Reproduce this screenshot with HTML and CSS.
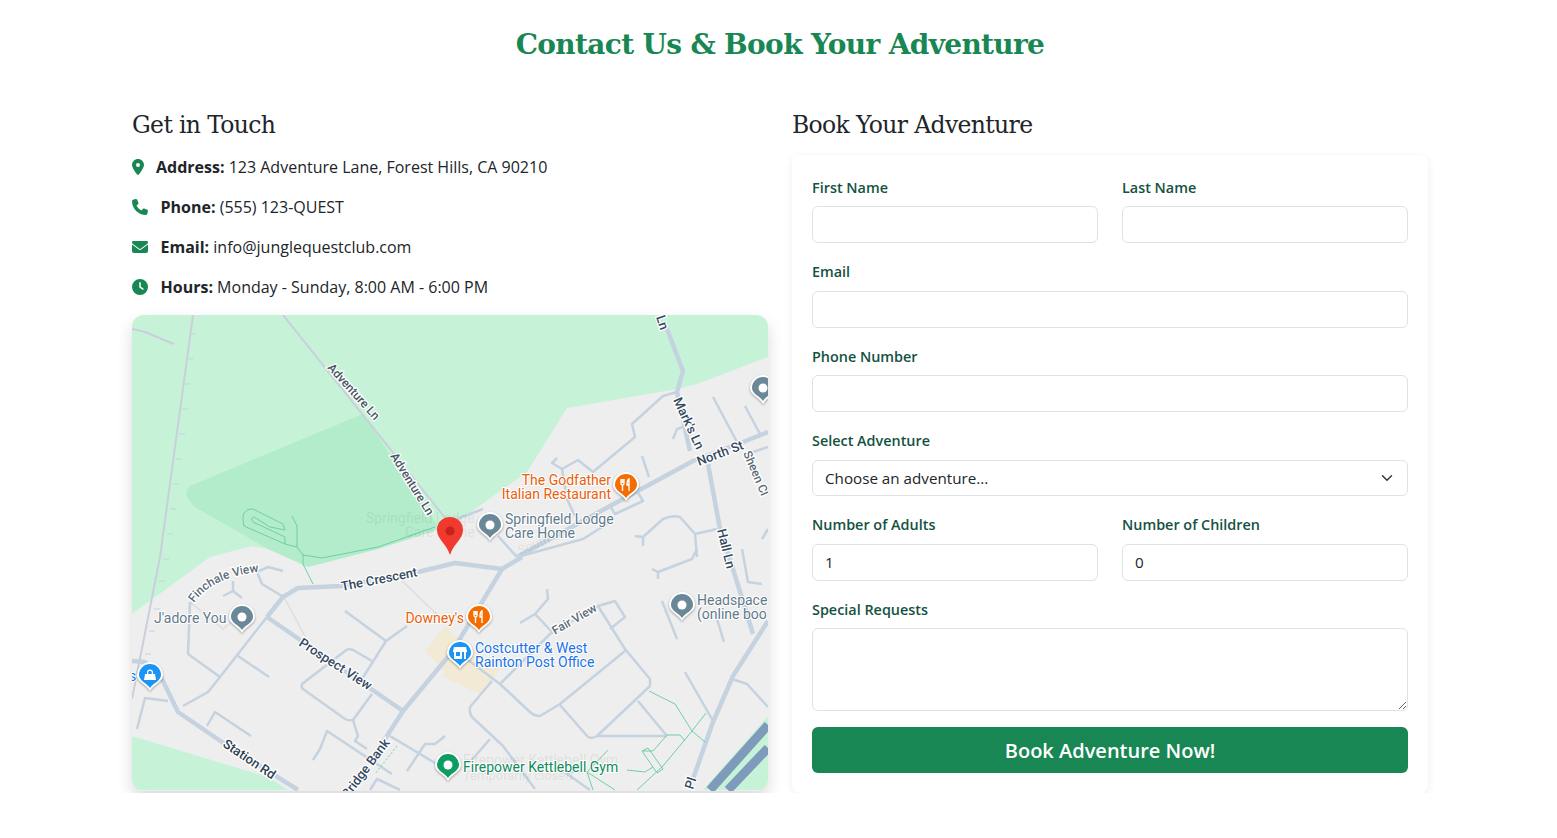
FILE: index.html
```html
<!DOCTYPE html>
<html>
<head>
    <title>Contact Us</title>
    <link rel="stylesheet" href="styles.css">
</head>
<body>
    <div class="container">
        <h1 class="page-title">Contact Us &amp; Book Your Adventure</h1>
        <div class="columns">
            <section>
                <h3 class="col-title">Get in Touch</h3>
                <p class="info"><svg class="icon icon-pin" viewBox="0 0 384 512"><path d="M215.7 499.2C267 435 384 279.4 384 192C384 86 298 0 192 0S0 86 0 192c0 87.4 117 243 168.3 307.2c12.3 15.3 35.1 15.3 47.4 0zM192 128a64 64 0 1 1 0 128 64 64 0 1 1 0-128z"/></svg><b>Address:</b> 123 Adventure Lane, Forest Hills, CA 90210</p>
                <p class="info"><svg class="icon" viewBox="0 0 512 512"><path d="M164.9 24.6c-7.7-18.6-28-28.5-47.4-23.2l-88 24C12.1 30.2 0 46 0 64C0 311.4 200.6 512 448 512c18 0 33.8-12.1 38.6-29.5l24-88c5.3-19.4-4.6-39.7-23.2-47.4l-96-40c-16.3-6.8-35.2-2.1-46.3 11.6L304.7 368C234.3 334.7 177.3 277.7 144 207.3L193.3 167c13.7-11.2 18.4-30 11.6-46.3l-40-96z"/></svg><b>Phone:</b> (555) 123-QUEST</p>
                <p class="info"><svg class="icon" viewBox="0 0 512 512"><path d="M48 64C21.5 64 0 85.5 0 112c0 15.1 7.1 29.3 19.2 38.4L236.8 313.6c11.4 8.5 27 8.5 38.4 0L492.8 150.4c12.1-9.1 19.2-23.3 19.2-38.4c0-26.5-21.5-48-48-48H48zM0 176V384c0 35.3 28.7 64 64 64H448c35.3 0 64-28.7 64-64V176L294.4 339.2c-22.8 17.1-54 17.1-76.8 0L0 176z"/></svg><b>Email:</b> info@junglequestclub.com</p>
                <p class="info"><svg class="icon" viewBox="0 0 512 512"><path d="M256 0a256 256 0 1 1 0 512A256 256 0 1 1 256 0zM232 120V256c0 8 4 15.5 10.7 20l96 64c11 7.4 25.9 4.4 33.3-6.7s4.4-25.9-6.7-33.3L280 243.2V120c0-13.3-10.7-24-24-24s-24 10.7-24 24z"/></svg><b>Hours:</b> Monday - Sunday, 8:00 AM - 6:00 PM</p>

                <div class="map">
                    <svg class="map-svg" viewBox="132 316 636 476">
                        <defs>
                            <path id="pin-out" d="M-13 0a13 13 0 1 1 26 0c0 7-9 9-13 16c-4-7-13-9-13-16z"/>
                            <path id="pin-in" d="M-11 0a11 11 0 1 1 22 0c0 6-8 8-11 13c-3-5-11-7-11-13z"/>
                            <path id="finchale" d="M194 604Q212 578 258 573"/>
                        </defs>

                        <rect x="132" y="316" width="636" height="476" fill="#eeeeee"/>
                        <path class="park" d="M132 316H768V358L697 385L677 390L567 409L527 473L493 497L455 525L378 550L308 568L268 550L252 547L210 558L132 615Z"/>
                        <path class="park-dark" d="M363 415L190 487Q185 492 187 497Q190 504 195 508L268 550L308 568L378 550L440 530Z"/>
                        <path class="park" d="M132 737L175 750L268 778L288 791H132Z"/>
                        <path class="park" d="M768 717L703 791H768Z"/>
                        <path class="beige" d="M445 627L425 652L444 672L443 678L480 695L500 670L485 660L460 640Z"/>

                        <g class="rail">
                            <path d="M193 316L160 558L132 700"/>
                            <path d="M132 330L145 333L174 345"/>
                            <path d="M283 316L450 525"/>
                        </g>
                        <path class="ticks" d="M190 335h6M187 360h6M184 385h6M182 410h6M179 435h6M176 460h6M173 485h6M170 510h6M167 535h6M163 560h6M159 582h6M154 610h6M149 632h6M145 655h6M140 678h6"/>

                        <g class="road-faint">
                            <path d="M285 600L308 643"/>
                            <path d="M402 582L445 623"/>
                            <path d="M190 603L223 630L233 622"/>
                        </g>
                        <g class="road-minor">
                            <path d="M677 393L663 397L632 425L635 438L593 473L578 461L562 470L552 464L557 459"/>
                            <path d="M562 470L567 500L575 517"/>
                            <path d="M642 457L649 478"/>
                            <path d="M610 507L615 515L643 502L637 492"/>
                            <path d="M483 510L457 520"/>
                            <path d="M517 558L583 540L610 523"/>
                            <path d="M498 537L517 558"/>
                            <path d="M635 537L643 538L663 520Q672 516 680 518L695 535L697 558"/>
                            <path d="M695 535L717 530"/>
                            <path d="M643 538V547"/>
                            <path d="M713 398L737 443"/>
                            <path d="M745 407L760 435"/>
                            <path d="M753 453L768 448"/>
                            <path d="M762 540L768 530"/>
                            <path d="M673 440L677 430L683 428"/>
                            <path d="M283 572L268 568L257 573L262 585L282 597"/>
                            <path d="M233 582V592L223 597"/>
                            <path d="M233 592L242 599"/>
                            <path d="M190 603L188 655L220 678"/>
                            <path d="M267 618L220 678L208 693L183 707"/>
                            <path d="M238 657L269 678"/>
                            <path d="M345 612L386 642L407 627"/>
                            <path d="M386 642L362 680"/>
                            <path d="M372 662L353 651Q348 649 345 652L302 685Q301 688 303 690L345 720Q349 722 353 721L372 695"/>
                            <path d="M207 727L215 713L251 737"/>
                            <path d="M137 730L145 699L168 702"/>
                            <path d="M313 761L320 750L327 732L392 775"/>
                            <path d="M390 737L445 770"/>
                            <path d="M445 737L435 745H425L407 772"/>
                            <path d="M353 721L358 737L355 742L367 750"/>
                            <path d="M370 791L377 780L400 791"/>
                            <path d="M547 590L548 600L535 615L520 624"/>
                            <path d="M535 615L552 633"/>
                            <path d="M598 607L550 635L500 685"/>
                            <path d="M598 607L615 602L625 618L610 630"/>
                            <path d="M598 607L625 650L650 680V687L597 737Q592 740 588 738L560 706"/>
                            <path d="M625 652L560 705L540 717Q534 717 530 713L500 685L460 655"/>
                            <path d="M492 682L470 708Q469 714 472 718L503 747L535 790"/>
                            <path d="M490 740L470 763"/>
                            <path d="M597 737L667 737M638 702L667 737"/>
                            <path d="M560 770L590 791"/>
                            <path d="M652 570L658 573L692 560L697 550"/>
                            <path d="M658 573V580"/>
                            <path d="M662 602L677 640"/>
                            <path d="M717 620L724 643"/>
                            <path d="M685 673L713 722"/>
                            <path d="M732 680L747 685L768 708"/>
                            <path d="M742 550L748 583L762 585"/>
                        </g>
                        <g class="road-main">
                            <path d="M132 662L145 663L162 680L178 713L222 743L298 791"/>
                            <path d="M267 618L283 598L298 589L342 587L418 573L455 564L502 570"/>
                            <path d="M267 618L403 712"/>
                            <path d="M372 760L385 740L403 712L452 653L502 570L522 558"/>
                            <path d="M517 558L610 507L693 462L743 443L768 433"/>
                            <path d="M662 325L667 330L683 372L677 393L690 452"/>
                            <path d="M708 465L720 530L733 570L753 635"/>
                            <path d="M768 622L733 677L713 723L693 780"/>
                        </g>
                        <g class="highway">
                            <path d="M768 726L710 791"/>
                            <path d="M768 749L728 791"/>
                        </g>

                        <g class="trail">
                            <path d="M285 545L244 527Q242 518 244 514Q248 509 253 510L283 525L285 531L270 528L254 518Q250 519 253 523L285 538L285 545L297 548L303 556L322 559L378 548L435 528"/>
                            <path d="M292 517L297 527V548"/>
                            <path d="M303 555V565L313 585"/>
                            <path d="M649 692L675 705L692 732L705 743"/>
                            <path d="M706 714L692 732L663 767L637 791"/>
                            <path d="M685 742L680 736H667L653 752L642 752L648 749L663 770L657 774L642 752"/>
                            <path d="M627 771L645 773L653 768"/>
                            <path d="M608 751L587 773H572"/>
                            <path d="M587 773L615 791M587 773L593 791"/>
                        </g>
                        <path class="dash" d="M397 747L375 775"/>

                        <g class="ghost">
                            <text x="366" y="524">Springfield Lodge</text>
                            <text x="405" y="538">Care Home</text>
                            <text x="463" y="766">Firepower Kettlebell Gym</text>
                            <text x="463" y="781" class="ghost-small">Temporarily closed</text>
                            <text transform="translate(520 556) rotate(-22)" class="ghost-small">South St</text>
                        </g>

                        <g class="road-label">
                            <text transform="translate(656 318) rotate(72)">Ln</text>
                            <text transform="translate(327 369) rotate(48)" class="tight">Adventure Ln</text>
                            <text transform="translate(390 457) rotate(58)" class="tight">Adventure Ln</text>
                            <text transform="translate(673 401) rotate(65)">Mark's Ln</text>
                            <text transform="translate(699 467) rotate(-21)">North St</text>
                            <text transform="translate(743 454) rotate(67)" class="small">Sheen Cl</text>
                            <text transform="translate(717 531) rotate(76)">Hall Ln</text>
                            <text transform="translate(342 592) rotate(-11)">The Crescent</text>
                            <text class="small"><textPath href="#finchale">Finchale View</textPath></text>
                            <text transform="translate(298 646) rotate(33)">Prospect View</text>
                            <text transform="translate(222 747) rotate(34)" class="strong">Station Rd</text>
                            <text transform="translate(348 800) rotate(-53)">Bridge Bank</text>
                            <text transform="translate(555 636) rotate(-30)" class="small">Fair View</text>
                            <text transform="translate(693 791) rotate(-72)">Pl</text>
                        </g>

                        <g class="poi poi-orange">
                            <text x="611" y="486" text-anchor="end">The Godfather</text>
                            <text x="611" y="500" text-anchor="end">Italian Restaurant</text>
                            <text x="464" y="624" text-anchor="end">Downey's</text>
                        </g>
                        <g class="poi poi-grey">
                            <text x="505" y="525">Springfield Lodge</text>
                            <text x="505" y="539">Care Home</text>
                            <text x="154" y="624">J'adore You</text>
                            <text x="697" y="606">Headspace</text>
                            <text x="697" y="620">(online boo</text>
                        </g>
                        <g class="poi poi-blue">
                            <text x="475" y="654">Costcutter &amp; West</text>
                            <text x="475" y="668">Rainton Post Office</text>
                            <text x="129" y="682">s</text>
                        </g>
                        <g class="poi poi-green">
                            <text x="463" y="773">Firepower Kettlebell Gym</text>
                        </g>

                        <g transform="translate(626 486)">
                            <use href="#pin-out" class="pin-base"/><use href="#pin-in" fill="#f56d00"/>
                            <path class="glyph" d="M-5 -6V-2Q-5 0 -3.5 0V6M-3.5 -6V-2M-2 -6V-2Q-2 0 -3.5 0M3 6V-6Q1 -5 1 0H3"/>
                        </g>
                        <g transform="translate(479 618)">
                            <use href="#pin-out" class="pin-base"/><use href="#pin-in" fill="#f56d00"/>
                            <path class="glyph" d="M-5 -6V-2Q-5 0 -3.5 0V6M-3.5 -6V-2M-2 -6V-2Q-2 0 -3.5 0M3 6V-6Q1 -5 1 0H3"/>
                        </g>
                        <g transform="translate(490 526)">
                            <use href="#pin-out" class="pin-base"/><use href="#pin-in" fill="#6b8899"/><circle r="4.5" fill="#fff"/>
                        </g>
                        <g transform="translate(242 618)">
                            <use href="#pin-out" class="pin-base"/><use href="#pin-in" fill="#6b8899"/><circle r="4.5" fill="#fff"/>
                        </g>
                        <g transform="translate(682 606)">
                            <use href="#pin-out" class="pin-base"/><use href="#pin-in" fill="#6b8899"/><circle r="4.5" fill="#fff"/>
                        </g>
                        <g transform="translate(763 389)">
                            <use href="#pin-out" class="pin-base"/><use href="#pin-in" fill="#6b8899"/><circle r="4.5" fill="#fff"/>
                        </g>
                        <g transform="translate(448 766)">
                            <use href="#pin-out" class="pin-base"/><use href="#pin-in" fill="#0d9d62"/><circle r="4.5" fill="#fff"/>
                        </g>
                        <g transform="translate(460 654)">
                            <use href="#pin-out" class="pin-base"/><use href="#pin-in" fill="#1a94f5"/>
                            <path fill="#fff" d="M-6 -6H6L7 -2V-1H6V6H-6V-1H-7V-2ZM-4 -1V3H0V-1ZM2 -1V6H4V-1Z"/>
                        </g>
                        <g transform="translate(150 676)">
                            <use href="#pin-out" class="pin-base"/><use href="#pin-in" fill="#1a94f5"/>
                            <path fill="#fff" d="M-5 -1H-3V-2.5A3 3 0 0 1 3 -2.5V-1H5L6 5H-6ZM-1.8 -1H1.8V-2.5A1.8 1.8 0 0 0 -1.8 -2.5Z"/>
                        </g>

                        <g transform="translate(450 518)">
                            <path fill="#f2392f" d="M0 0C-7.5 0 -13 5.5 -13 13C-13 22 -4 26 0 38C4 26 13 22 13 13C13 5.5 7.5 0 0 0Z"/>
                            <circle cy="14" r="4.5" fill="#c5221f"/>
                        </g>
                    </svg>
                </div>
            </section>

            <section>
                <h3 class="col-title">Book Your Adventure</h3>
                <form class="card">
                    <div class="form-row">
                        <div class="field">
                            <label for="first">First Name</label>
                            <input type="text" id="first">
                        </div>
                        <div class="field">
                            <label for="last">Last Name</label>
                            <input type="text" id="last">
                        </div>
                    </div>
                    <div class="field">
                        <label for="email">Email</label>
                        <input type="email" id="email">
                    </div>
                    <div class="field">
                        <label for="phone">Phone Number</label>
                        <input type="tel" id="phone">
                    </div>
                    <div class="field">
                        <label for="adventure">Select Adventure</label>
                        <select id="adventure">
                            <option>Choose an adventure...</option>
                        </select>
                    </div>
                    <div class="form-row">
                        <div class="field">
                            <label for="adults">Number of Adults</label>
                            <input type="number" id="adults" value="1">
                        </div>
                        <div class="field">
                            <label for="children">Number of Children</label>
                            <input type="number" id="children" value="0">
                        </div>
                    </div>
                    <div class="field field-last">
                        <label for="requests">Special Requests</label>
                        <textarea id="requests"></textarea>
                    </div>
                    <button type="button" class="submit">Book Adventure Now!</button>
                </form>
            </section>
        </div>
    </div>
</body>
</html>
```
FILE: styles.css
```css
body {
    margin: 0;
    font-family: "Open Sans", Arial, sans-serif;
    font-size: 16px;
    line-height: 24px;
    color: #212529;
    background-color: #fff;
}

.container {
    width: 1296px;
    margin-left: 120px;
    padding: 26px 12px 0;
}

.page-title {
    margin: 0 0 43px;
    font-family: "DejaVu Serif", serif;
    font-size: 28px;
    line-height: 38.4px;
    font-weight: bold;
    letter-spacing: -.67px;
    text-align: center;
    color: #198754;
}

.columns {
    display: grid;
    grid-template-columns: 636px 636px;
    gap: 24px;
}

.col-title {
    margin: 0 0 14.4px;
    padding-top: 2px;
    height: 31.6px;
    font-family: "DejaVu Serif", serif;
    font-size: 23.5px;
    line-height: 33.6px;
    font-weight: normal;
    letter-spacing: -.65px;
}

.info {
    margin: 0 0 16px;
}

.info b {
    font-weight: 700;
}

.icon {
    width: 16px;
    height: 16px;
    margin-right: 12.5px;
    vertical-align: -2px;
    fill: #198754;
}

.icon-pin {
    width: 12px;
    margin-right: 12px;
}

.map {
    height: 476px;
    border-radius: 12px;
    overflow: hidden;
    box-shadow: 0 8px 16px rgba(0, 0, 0, .15);
}

.map-svg {
    display: block;
    width: 636px;
    height: 476px;
}

.park {
    fill: #c6f2d8;
}

.park-dark {
    fill: #b3ecca;
}

.beige {
    fill: #f3ead5;
}

.rail {
    fill: none;
    stroke: #c9cfdb;
    stroke-width: 2;
}

.ticks {
    fill: none;
    stroke: #c9cfdb;
    stroke-width: 1;
}

.road-faint {
    fill: none;
    stroke: #dddddd;
    stroke-width: 1.5;
}

.road-minor {
    fill: none;
    stroke: #c5d2df;
    stroke-width: 2.5;
    stroke-linejoin: round;
}

.road-main {
    fill: none;
    stroke: #c5d2df;
    stroke-width: 4.5;
    stroke-linejoin: round;
}

.highway {
    fill: none;
    stroke: #7f9bbc;
    stroke-width: 9;
}

.trail {
    fill: none;
    stroke: #6fcfa5;
    stroke-width: 1;
}

.dash {
    fill: none;
    stroke: #6fcfa5;
    stroke-width: 1;
    stroke-dasharray: 2 2;
}

.map-svg text {
    font-family: Roboto, sans-serif;
}

.ghost text {
    font-size: 14px;
    fill: #000;
    opacity: .06;
}

.ghost .ghost-small {
    font-size: 13px;
}

.road-label text {
    font-size: 13px;
    font-weight: 500;
    fill: #34495e;
    stroke: #fff;
    stroke-width: 2.5px;
    paint-order: stroke;
}

.road-label .tight {
    font-size: 12px;
    fill: #4a5560;
}

.road-label .small {
    font-size: 12px;
    fill: #5c6b78;
}

.road-label .strong {
    font-size: 13px;
    fill: #2c3e50;
}

.poi text {
    font-size: 14px;
    stroke: #fff;
    stroke-width: 2px;
    paint-order: stroke;
}

.poi-orange text {
    fill: #e8600a;
}

.poi-grey text {
    fill: #5f7a8b;
}

.poi-blue text {
    fill: #1a73e8;
}

.poi-green text {
    fill: #108a5c;
}

.pin-base {
    fill: #fff;
    filter: drop-shadow(0 1px 1px rgba(0, 0, 0, .35));
}

.glyph {
    fill: none;
    stroke: #fff;
    stroke-width: 1.4;
}

.card {
    padding: 21.4px 20px 20px;
    background-color: #fff;
    border-radius: 8px;
    box-shadow: 0 2px 8px rgba(0, 0, 0, .07);
}

.form-row {
    display: grid;
    grid-template-columns: 1fr 1fr;
    gap: 24px;
}

.field {
    margin-bottom: 18px;
}

.field-last {
    margin-bottom: 16px;
}

label {
    display: block;
    margin-bottom: 8px;
    font-size: 14.4px;
    line-height: 21.6px;
    font-weight: 600;
    color: #14523f;
}

input,
select,
textarea {
    display: block;
    box-sizing: border-box;
    width: 100%;
    height: 36.8px;
    padding: 6px 12px;
    font-family: inherit;
    font-size: 15.2px;
    line-height: 22.8px;
    color: #212529;
    background-color: #fff;
    border: 1px solid #dee2e6;
    border-radius: 6px;
    outline: none;
}

select {
    appearance: none;
    background-image: url("data:image/svg+xml,%3csvg xmlns='http://www.w3.org/2000/svg' viewBox='0 0 16 16'%3e%3cpath fill='none' stroke='%23343a40' stroke-linecap='round' stroke-linejoin='round' stroke-width='2' d='m2 5 6 6 6-6'/%3e%3c/svg%3e");
    background-repeat: no-repeat;
    background-position: right 12px center;
    background-size: 16px 12px;
}

textarea {
    height: 83px;
}

.submit {
    display: block;
    width: 100%;
    height: 46px;
    font-family: inherit;
    font-size: 20px;
    font-weight: 600;
    color: #fff;
    background-color: #198754;
    border: none;
    border-radius: 6px;
}
```
